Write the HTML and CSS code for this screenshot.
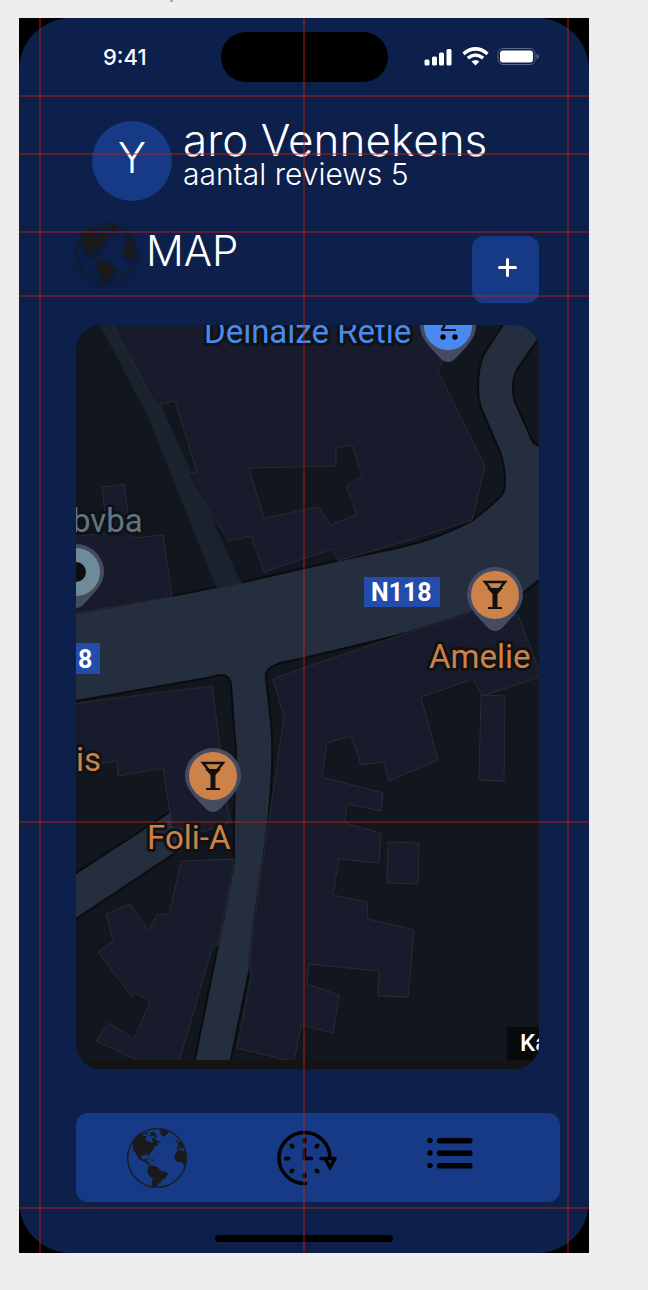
FILE: index.html
```html
<!DOCTYPE html>
<html lang="nl">
<head>
<meta charset="utf-8">
<meta name="viewport" content="width=device-width, initial-scale=1">
<title>Map</title>
<link rel="stylesheet" href="styles.css">
</head>
<body>
<svg class="sprite" aria-hidden="true">
  <symbol id="globe" viewBox="0 0 180 180">
    <circle cx="90" cy="90" r="88" fill="none" stroke="#1a1a1a" stroke-width="4"/>
    <path fill="#1a1a1a" d="M17 46L18 40 26 29 36 20 46 16 50 20 47 24 56 24 62 28 54 32 58 38 70 41 74 46 78 42 75 35 77 28 84 32 89 36 92 38 101 40 98 43 90 44 94 49 91 53 83 56 80 61 77 68 72 73 68 77 67 85 64 84 62 79 54 80 46 82 43 87 45 93 51 95 56 91 60 92 57 98 64 101 66 108 71 112 64 111 57 104 46 98 35 92 31 85 26 75 19 67Z"/>
    <path fill="#1a1a1a" d="M49 16L58 12 64 15 58 19 68 22 73 18 68 13 78 12 88 17 86 22 92 25 86 29 79 23 74 25 62 22Z"/>
    <path fill="#1a1a1a" d="M96 3L112 4 126 10 123 17 117 20 112 27 105 22 99 17 101 11Z"/>
    <path fill="#1a1a1a" d="M64 115L72 111 80 113 88 116 95 119 98 127 108 130 123 134 120 143 116 150 107 154 102 163 95 166 89 175 78 178 73 176 75 164 77 151 68 145 61 134 63 125Z"/>
    <path fill="#1a1a1a" d="M60 89L68 90 75 94 69 94ZM75 94L84 96 80 98 74 97ZM144 35L150 37 153 42 160 42 166 51 170 62 164 63 159 57 155 63 149 65 149 59 153 57 151 51 155 48 150 44Z"/>
    <path fill="#1a1a1a" d="M150 69L158 64 165 68 173 69 178 82 177 100 172 114 168 106 164 102 154 103 146 98 142 90 144 79Z"/>
  </symbol>
  <symbol id="pin" viewBox="-30 -30 60 70" overflow="visible">
    <path d="M-28 0A28 28 0 1 1 28 0C28 13 16 23 8 32Q0 40 -8 32C-16 23 -28 13 -28 0Z"/>
  </symbol>
</svg>

<span class="caption-tail"></span>
<main class="phone">
  <div class="screen">
    <header class="status">
      <time class="clock">9:41</time>
      <div class="island"></div>
      <svg class="indicators" viewBox="0 0 115 20" role="img" aria-label="Signaal, wifi en batterij">
        <g fill="#fff">
          <rect x="0.5" y="12.5" width="5" height="6" rx="1.5"/><rect x="8" y="9.500" width="5" height="9" rx="1.500"/>
          <rect x="15" y="5.500" width="5" height="13" rx="1.500"/><rect x="22.500" y="2" width="5" height="16.500" rx="1.500"/>
          <path d="M51.500 18.500L47.600 14.500Q51.500 11.300 55.400 14.500Z"/>
          <rect x="76" y="3.500" width="33" height="12" rx="3"/>
        </g>
        <path d="M39.500 6.800Q51.500-3 63.500 6.800M43.800 11.200Q51.500 4.800 59.200 11.200" fill="none" stroke="#fff" stroke-width="3.500"/>
        <rect x="74" y="1.500" width="37" height="16" rx="5" fill="none" stroke="#56658a" stroke-width="1"/>
        <path d="M112.500 6.500Q117.500 9.500 112.500 12.500Z" fill="#56658a"/>
      </svg>
    </header>

    <section class="profile">
      <div class="avatar">Y</div>
      <div>
        <p class="name">aro Vennekens</p>
        <p class="reviews">aantal reviews 5</p>
      </div>
    </section>

    <section class="heading">
      <svg class="globe shadow" aria-hidden="true"><use href="#globe"/></svg>
      <h1 class="title">MAP</h1>
      <button class="add" type="button" aria-label="Toevoegen">
        <svg class="plus" viewBox="0 0 28 28" aria-hidden="true"><path d="M15.500 3.500V19.500M7.500 11.500H23.500" stroke="#fff" stroke-width="3" stroke-linecap="round"/></svg>
      </button>
    </section>

    <svg class="map" viewBox="76 325 463 744" role="img" aria-label="Kaart">
      <rect x="76" y="325" width="463" height="744" fill="#11161f"/>
      <path fill="#1a222d" d="M100 325L148 417 217 590H244L162 407 112 325Z"/>
      <g fill="#252e3e" stroke="#0a0c0f" stroke-width="2">
        <path d="M70 877L170 812 215 812 175 853 70 923Z"/>
        <path d="M70 614L172 596 217 587 240 583 300 569 373 553Q405 547 427 540 450 532 473 520L487 509 500 497Q506 490 505 479 504 462 500 452L481 408Q478 398 478 387 478 368 483 356 488 347 503 325V318H560V565L539 580 523 593 467 614 407 633 350 647 300 659 280 663Q264 669 266 678L271 723Q273 745 272 767 271 800 266 840L253 930 249 972 230 1064H194L223 920 234 860V817L236 753 231 686Q231 675 220 675L207 678 70 702Z"/>
        <path fill="#11161f" d="M545 330L536 342 518 368Q513 377 513 387 513 396 515 402L532 440Q534 446 545 446Z"/>
      </g>
      <path fill="#1a222d" d="M214 580L218 591 243 585 238 576Z"/>
      <path fill="#252e3e" d="M216 589L243 583 246 592 218 598Z"/>
      <g fill="#181b2c" stroke="#2a2c31" stroke-width="1">
        <path fill-rule="evenodd" d="M110 320L156 405 175 401 197 472 187 474 192 485 229 541 251 536 264 572 332 549 338 561 410 540 472 520 485 466 438 371 442 362 455 320ZM249 468L336 466V448L352 445 362 476 346 486 357 514 331 525 318 507 264 518Z"/>
        <path fill="#11161f" stroke="none" d="M273 570L332 550 337 560 300 567Z"/>
        <path d="M70 537L107 533 102 487 124 484 128 512 132 538 163 535 172 597 70 614Z"/>
        <path d="M70 704L212 686 220 747 228 810 231 822 203 832 172 827 163 768 118 776 117 761 103 763 70 770Z"/>
        <path d="M181 861L234 859 223 920 218 945H213L179 1062H141L96 1041 109 1023 134 1039 150 1002 136 993 132 997 98 952 113 941 106 914 130 904 149 931 157 914 169 915Z"/>
        <path d="M273 679L300 669 407 633 470 613 518 615 539 670V677L483 696 473 679 421 697 438 760 389 781 384 762 361 765 351 736 327 743 322 777 383 793 381 811 347 804 345 823 381 833 379 863 339 859 333 895 367 902 368 919 414 930 408 997 378 996 379 971 309 964 307 984 339 995 333 1033 301 1025 294 1062 237 1048 252 972H249L253 930 266 840 284 717Z"/>
        <path d="M481 695L505 696 504 781 479 780ZM388 842L419 843 418 884 387 883Z"/>
      </g>

      <g class="badge-text">
        <rect x="364" y="577" width="76" height="30" fill="#244cab"/><text x="371" y="601">N118</text>
        <rect x="70" y="643" width="30" height="31" fill="#244cab"/><text x="78" y="668">8</text>
      </g>

      <g transform="translate(448 326)">
        <use href="#pin" x="-30" y="-30" width="60" height="70" fill="#454c61"/><circle r="24" fill="#4a8af0"/>
        <path d="M-7-8H11V-4L8-1H-2L-4 3H8V5H-7V3L-4-2Z" fill="#111"/>
        <circle cx="-5" cy="11" r="2.700"/><circle cx="7" cy="11" r="2.700"/>
      </g>
      <g transform="translate(76 572)">
        <use href="#pin" x="-30" y="-30" width="60" height="70" fill="#454c61"/><circle r="24" fill="#6f8b9a"/><circle r="10" fill="#0d0d0d"/>
      </g>
      <g transform="translate(495 595)">
        <use href="#pin" x="-30" y="-30" width="60" height="70" fill="#454c61"/><circle r="24" fill="#cd824a"/>
        <path d="M-10-13H10L1-2H-1Z" fill="none" stroke="#111" stroke-width="2.500"/><path d="M-8-7H8L2.500-1V12H7V14H-7V12H-2.500V-1Z" fill="#111"/>
      </g>
      <g transform="translate(213 776)">
        <use href="#pin" x="-30" y="-30" width="60" height="70" fill="#454c61"/><circle r="24" fill="#cd824a"/>
        <path d="M-10-13H10L1-2H-1Z" fill="none" stroke="#111" stroke-width="2.500"/><path d="M-8-7H8L2.500-1V12H7V14H-7V12H-2.500V-1Z" fill="#111"/>
      </g>

      <g class="place">
        <text x="204" y="343" fill="#4a8af0">Delhaize Retie</text>
        <text x="72" y="532" fill="#5f7688">bvba</text>
        <text x="429" y="668" fill="#cd824a">Amelie</text>
        <text x="76" y="771" fill="#cd824a">is</text>
        <text x="147" y="849" fill="#cd824a">Foli-A</text>
      </g>
      <rect x="507" y="1027" width="32" height="33" fill="#07090b"/>
      <text class="credit" x="520" y="1051">Ka</text>
      <rect x="76" y="1060" width="463" height="9" fill="#141414"/>
    </svg>

    <nav class="tabs" aria-label="Hoofdmenu">
      <button class="tab" type="button" aria-label="Kaart"><svg class="globe" aria-hidden="true"><use href="#globe"/></svg></button>
      <button class="tab" type="button" aria-label="Geschiedenis">
        <svg class="history" viewBox="0 0 60 56" fill="none" stroke="#000" stroke-width="3.500" stroke-linecap="round" aria-hidden="true">
          <path d="M28.500 53.500H27.500A25.500 25.500 0 1 1 53 28M44 28.500H58M48 28.500L53 37.500 58 28.500"/>
          <path d="M27.500 19V28.500H34.500"/>
          <path stroke-width="4" d="M27.500 9.500V11.500M27.500 44.500V46.500M9 28.500H11.500M14.500 15.500L15.500 16.500M40.500 15.500L39.500 16.500M14.500 41.500L15.500 40.500M40.500 41.500L39.500 40.500"/>
        </svg>
      </button>
      <button class="tab" type="button" aria-label="Lijst">
        <svg class="list" viewBox="0 0 46 42" aria-hidden="true">
          <circle cx="3" cy="3.500" r="2.700"/><circle cx="3" cy="16" r="2.700"/><circle cx="3" cy="28.500" r="2.700"/>
          <rect x="10" y="1" width="35.500" height="5.500" rx="2"/><rect x="10" y="13.500" width="35.500" height="5.500" rx="2"/><rect x="10" y="26" width="35.500" height="5.500" rx="2"/>
        </svg>
      </button>
    </nav>
    <div class="home"></div>
  </div>

  <div class="guides" aria-hidden="true">
    <i class="row row-1"></i><i class="row row-2"></i><i class="row row-3"></i><i class="row row-4"></i><i class="row row-5"></i><i class="row row-6"></i>
    <i class="col col-1"></i><i class="col col-2"></i><i class="col col-3"></i>
  </div>
</main>
</body>
</html>
```

FILE: styles.css
```css
* { box-sizing: border-box; }

body {
  margin: 0;
  padding: 18px 59px 36px 19px;
  background: #eee;
  font-family: Inter, "Liberation Sans", sans-serif;
  color: #fff;
}

.sprite { position: absolute; width: 0; height: 0; }

.caption-tail {
  position: absolute;
  top: 0;
  left: 170px;
  width: 3px;
  height: 2px;
  background: #aaa;
}

.phone { position: relative; background: #000; }

.screen {
  display: flex;
  flex-direction: column;
  padding: 14px 50px 11px 57px;
  border-radius: 52px;
  background: #0d1f4b;
}

.status {
  display: grid;
  grid-template-columns: 1fr 167px 1fr;
  align-items: center;
  margin: 0 -50px 0 -57px;
}

.clock { padding-left: 84px; font-size: 22px; font-weight: 500; line-height: 28px; }
.island { height: 50px; border-radius: 25px; background: #000; }
.indicators { width: 115px; height: 20px; margin-left: 36px; }

.profile { display: flex; gap: 11px; margin: 39px 0 0 16px; }

.avatar {
  display: grid;
  place-items: center;
  flex: none;
  width: 80px;
  height: 80px;
  padding-bottom: 6px;
  border-radius: 50%;
  background: #173a87;
  font-size: 42px;
  font-weight: 300;
  line-height: 48px;
}

.name, .reviews { margin: 0; font-weight: 300; white-space: nowrap; }
.name { font-size: 44px; line-height: 38px; }
.reviews { font-size: 30px; line-height: 30px; }

.heading { display: flex; align-items: flex-start; gap: 10px; margin-top: 22px; }
.globe { display: block; width: 60px; height: 60px; }
.shadow { filter: drop-shadow(0 4px 3px rgba(0, 0, 0, .25)); }
.title { flex: 1; margin: 0; font-size: 42px; font-weight: 300; line-height: 56px; }

.add {
  display: grid;
  place-items: center;
  width: 67px;
  height: 67px;
  margin-top: 13px;
  padding: 0;
  border: 0;
  border-radius: 12px;
  background: #173a87;
}
.plus { width: 28px; height: 28px; }

.map { display: block; width: 100%; height: auto; margin-top: 22px; border-radius: 25px; font-family: Roboto, sans-serif; }
.place { font-size: 33px; stroke: #101214; stroke-width: 6px; stroke-linejoin: round; paint-order: stroke; }
.badge-text { font-size: 25px; font-weight: 700; }
.badge-text text { fill: #fff; }
.credit { font-size: 24px; font-weight: 500; fill: #fff; }

.tabs {
  display: flex;
  align-items: center;
  gap: 90px;
  min-height: 89px;
  margin: 44px -21px 0 0;
  padding: 14px 51px;
  border-radius: 12px;
  background: #173a87;
}
.tab { padding: 0; border: 0; background: none; }
.history { display: block; width: 60px; height: 56px; }
.list { display: block; width: 46px; height: 42px; }

.home { width: 178px; height: 7px; margin: 33px auto 0 139px; border-radius: 4px; background: #000; }

.guides { position: absolute; inset: 0; pointer-events: none; }
.row, .col { position: absolute; background: rgba(184, 34, 16, .45); }
.row { left: 0; right: 0; height: 2px; }
.col { top: 0; bottom: 0; width: 2px; }
.row-1 { top: 77px; }
.row-2 { top: 135px; }
.row-3 { top: 213px; }
.row-4 { top: 277px; }
.row-5 { bottom: 430px; }
.row-6 { bottom: 44px; }
.col-1 { left: 20px; }
.col-2 { left: calc(50% - 1px); }
.col-3 { right: 20px; }
```
